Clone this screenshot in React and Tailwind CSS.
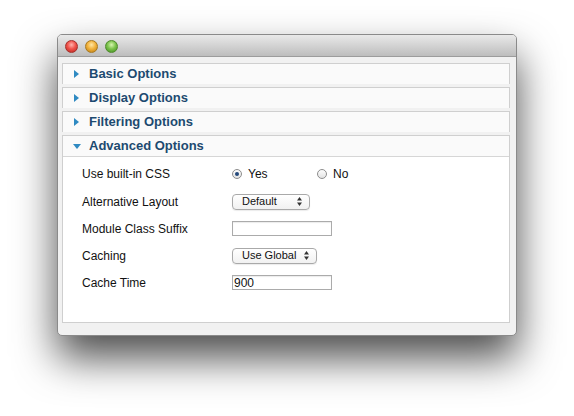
import React from "react";

const font = { fontFamily: '"Liberation Sans", Arial, sans-serif' };

const Light = ({ color }) => {
  const styles = {
    red: "bg-[radial-gradient(circle_at_50%_35%,#ffb3ad_0%,#f0544c_45%,#b9221c_100%)] border-[#a4302b]",
    yellow: "bg-[radial-gradient(circle_at_50%_35%,#ffe7a6_0%,#f2b33d_45%,#b97a10_100%)] border-[#a8791f]",
    green: "bg-[radial-gradient(circle_at_50%_35%,#d8f5b0_0%,#7dc44d_45%,#3f8a1e_100%)] border-[#4f8a2c]",
  };
  return <span className={`block w-[13px] h-[13px] rounded-full border ${styles[color]}`} />;
};

const Arrow = ({ open }) =>
  open ? (
    <svg width="8" height="5" viewBox="0 0 8 5" className="mt-[2px]">
      <path d="M0 0 L8 0 L4 5 Z" fill="#2f8ac2" />
    </svg>
  ) : (
    <svg width="5" height="8" viewBox="0 0 5 8">
      <path d="M0 0 L5 4 L0 8 Z" fill="#2f8ac2" />
    </svg>
  );

const Header = ({ title, open }) => (
  <div className="h-[20px] flex items-center bg-[#fafafa] pb-[1px]">
    <div className="w-[26px] pl-[1px] flex justify-center">
      <Arrow open={open} />
    </div>
    <span className="text-[13px] font-bold text-[#1d4a70] leading-none" style={font}>
      {title}
    </span>
  </div>
);

const Closed = ({ title }) => (
  <div className="h-[21px] mb-[3px] border border-[#cfcfcf]">
    <Header title={title} />
  </div>
);

const SelectArrows = () => (
  <svg width="5" height="9" viewBox="0 0 5 9">
    <path d="M0 3.5 L2.5 0 L5 3.5 Z" fill="#333" />
    <path d="M0 5.5 L2.5 9 L5 5.5 Z" fill="#333" />
  </svg>
);

const Select = ({ value, width }) => (
  <div
    className={`${width} h-[16px] rounded-[4px] border border-[#a9a9a9] bg-[linear-gradient(#ffffff,#f1f1f1)] shadow-[0_1px_1px_rgba(0,0,0,0.08)] flex items-center justify-between pl-[9px] pr-[7px]`}
  >
    <span className="text-[11px] text-[#111] leading-none" style={font}>
      {value}
    </span>
    <SelectArrows />
  </div>
);

const TextBox = ({ value }) => (
  <div className="w-[100px] h-[15px] border border-[#ababab] bg-white shadow-[inset_0_1px_1px_rgba(0,0,0,0.08)] flex items-center pl-[1px]">
    <span className="text-[12px] text-[#111] leading-none" style={font}>
      {value}
    </span>
  </div>
);

const Radio = ({ checked, label }) => (
  <div className="flex items-center gap-[6px]">
    <span className="w-[10px] h-[10px] rounded-full border border-[#8d8d8d] bg-[linear-gradient(#fdfdfd,#e3e3e3)] flex items-center justify-center">
      {checked && <span className="w-[4px] h-[4px] rounded-full bg-[#24487a]" />}
    </span>
    <span className="text-[12px] text-[#111] leading-none" style={font}>
      {label}
    </span>
  </div>
);

const Row = ({ label, tall, children }) => (
  <div className={`${tall ? "h-[28px]" : "h-[27px]"} flex items-center`}>
    <span className="w-[150px] text-[12px] text-[#111] leading-none" style={font}>
      {label}
    </span>
    <div className="flex items-center">{children}</div>
  </div>
);

export default function App() {
  return (
    <div className="w-[574px] h-[416px] bg-white pt-[34px] pl-[57px]">
      <div className="w-[460px] h-[302px] rounded-[5px] border border-[#8a8a8a] bg-[#f1f1f1] shadow-[0_22px_42px_rgba(0,0,0,0.7)] flex flex-col overflow-hidden">
        <div className="h-[22px] shrink-0 border-b border-[#9c9c9c] bg-[linear-gradient(#e9e9e9,#bdbdbd)] flex items-center gap-[7px] pl-[7px] pt-[2px]">
          <Light color="red" />
          <Light color="yellow" />
          <Light color="green" />
        </div>
        <div className="flex-1 flex flex-col pl-[4px] pr-[6px] pt-[6px] pb-[12px]">
          <Closed title="Basic Options" />
          <Closed title="Display Options" />
          <Closed title="Filtering Options" />
          <div className="flex-1 border border-[#cfcfcf] bg-white flex flex-col">
            <div className="border-b border-[#d6d6d6]">
              <Header title="Advanced Options" open />
            </div>
            <div className="pl-[19px] pt-[3px]">
              <Row label="Use built-in CSS" tall>
                <div className="w-[85px]">
                  <Radio checked label="Yes" />
                </div>
                <Radio label="No" />
              </Row>
              <Row label="Alternative Layout">
                <Select value="Default" width="w-[78px]" />
              </Row>
              <Row label="Module Class Suffix">
                <TextBox value="" />
              </Row>
              <Row label="Caching">
                <Select value="Use Global" width="w-[85px]" />
              </Row>
              <Row label="Cache Time">
                <TextBox value="900" />
              </Row>
            </div>
          </div>
        </div>
      </div>
    </div>
  );
}
